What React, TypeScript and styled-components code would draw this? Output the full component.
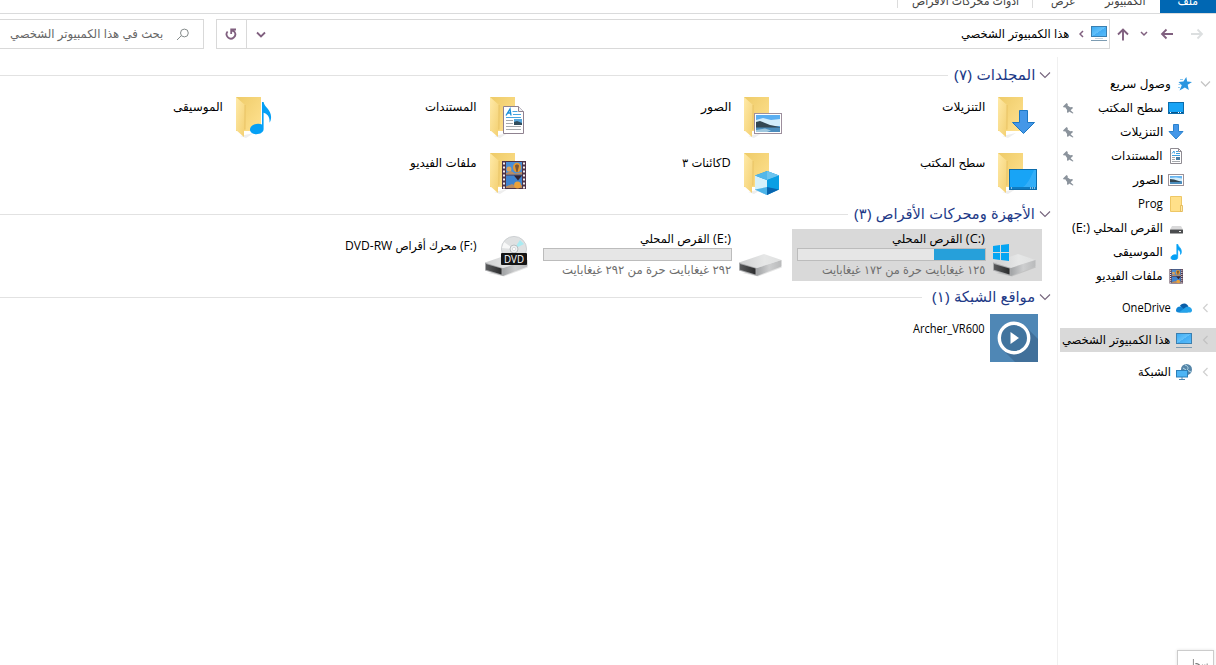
import React, { useLayoutEffect, useRef } from "react";
import styled, { createGlobalStyle } from "styled-components";

const Global = createGlobalStyle`
  * { box-sizing: border-box; }
  html, body { margin: 0; padding: 0; background: #fff; overflow: hidden; }
  body { font-family: "Open Sans", "DejaVu Sans Condensed", "DejaVu Sans", sans-serif; font-size: 12px; color: #000; }
  svg { display: block; flex: none; }
`;

/* ---------- text that keeps a known measure ---------- */

const Measure = styled.span<{ $w: number }>`
  display: block;
  flex: none;
  width: ${(p) => p.$w}px;
  white-space: nowrap;
`;
const Glyphs = styled.span`
  display: inline-block;
  transform-origin: right center;
`;

function Text({ w, children }: { w: number; children: React.ReactNode }) {
  const ref = useRef<HTMLSpanElement>(null);
  useLayoutEffect(() => {
    const el = ref.current;
    if (!el) return;
    const fit = () => {
      el.style.transform = `scaleX(${w / el.offsetWidth})`;
    };
    fit();
    document.fonts?.ready.then(fit);
  }, [w]);
  return (
    <Measure $w={w}>
      <Glyphs ref={ref}>{children}</Glyphs>
    </Measure>
  );
}

/* ---------- layout ---------- */

const Window = styled.div`
  direction: rtl;
  width: 1216px;
  height: 665px;
  display: flex;
  flex-direction: column;
  overflow: hidden;
  background: #fff;
`;
const Ribbon = styled.div`
  height: 14px;
  flex: none;
  display: flex;
  border-bottom: 1px solid #dadbdc;
  overflow: hidden;
  color: #444;
`;
const Tab = styled.div<{ $start: number; $end: number; $file?: boolean }>`
  height: 13px;
  display: flex;
  padding: 0 ${(p) => p.$start}px 0 ${(p) => p.$end}px;
  line-height: 20px;
  background: ${(p) => (p.$file ? "#0067b3" : "transparent")};
  color: ${(p) => (p.$file ? "#fff" : "#444")};
  & > span { margin-top: -9px; }
`;
const TabDivider = styled.i`
  width: 1px;
  height: 8px;
  background: #dcdcdc;
`;
const Toolbar = styled.div`
  height: 43px;
  flex: none;
  display: flex;
  align-items: flex-start;
  padding-top: 5px;
`;
const Nav = styled.div`
  width: 106px;
  height: 30px;
  display: flex;
  align-items: center;
`;
const NavButton = styled.div<{ $before: number }>`
  margin-right: ${(p) => p.$before}px;
`;
const Box = styled.div<{ $w: number }>`
  width: ${(p) => p.$w}px;
  height: 30px;
  border: 1px solid #d9d9d9;
  display: flex;
  align-items: center;
  & > span { margin-bottom: 2px; }
`;
const Address = styled(Box)`
  padding-right: 1px;
`;
const AddressIcon = styled.div`
  margin-bottom: 2px;
`;
const Crumb = styled.div`
  margin: 0 6px 0 10px;
`;
const Filler = styled.div`
  flex: 1;
`;
const DropButton = styled.div`
  width: 29px;
  display: flex;
  justify-content: center;
  padding-right: 1px;
`;
const RefreshButton = styled.div`
  width: 30px;
  height: 28px;
  border-right: 1px solid #d9d9d9;
  display: flex;
  align-items: center;
  justify-content: center;
  padding-right: 2px;
`;
const Search = styled(Box)`
  margin-right: 12px;
  border-left: 0;
  padding-right: 14px;
  gap: 13px;
  color: #666;
`;
const Body = styled.div`
  flex: 1;
  display: flex;
  min-height: 0;
`;
const Sidebar = styled.div`
  width: 159px;
  flex: none;
  border-left: 1px solid #f0f0f0;
  padding: 15px 0 0 2px;
`;
const TreeRow = styled.div<{ $root?: boolean; $active?: boolean; $gap?: boolean }>`
  height: 24px;
  margin-top: ${(p) => (p.$gap ? 8 : 0)}px;
  padding-right: ${(p) => (p.$root ? 5 : 32)}px;
  display: flex;
  align-items: center;
  background: ${(p) => (p.$active ? "#d9d9d9" : "transparent")};
  & > span { margin-bottom: 2px; }
`;
const TreeIcon = styled.div<{ $before?: number }>`
  margin-right: ${(p) => p.$before ?? 0}px;
  margin-left: 5px;
`;
const Pin = styled.div`
  margin-right: auto;
  padding-left: 2px;
`;
const Main = styled.div`
  flex: 1;
  min-width: 0;
  padding-top: 2px;
`;
const Group = styled.div`
  padding-top: 4px;
`;
const GroupHeader = styled.div`
  height: 24px;
  display: flex;
  align-items: center;
  padding-right: 6px;
  color: #1e3a87;
  font-size: 15px;
  line-height: 22px;
  & > span { margin: 0 4px 2px 0; }
`;
const Rule = styled.i<{ $gap: number }>`
  flex: 1;
  height: 1px;
  margin-right: ${(p) => p.$gap}px;
  background: #e2e2e2;
`;
const Tiles = styled.div`
  display: grid;
  grid-template-columns: repeat(4, 250px);
  gap: 4px;
  padding: 3px 15px 0 0;
`;
const Tile = styled.div<{ $selected?: boolean }>`
  height: 52px;
  padding: 2px 4px 2px 0;
  display: flex;
  background: ${(p) => (p.$selected ? "#d9d9d9" : "transparent")};
`;
const FolderIcon = styled.div`
  padding-top: 1px;
`;
const TileText = styled.div<{ $drive?: boolean; $wide?: boolean }>`
  padding-top: ${(p) => (p.$drive ? 0 : 7)}px;
  margin-right: ${(p) => (p.$wide ? 5 : 4)}px;
  line-height: 16px;
  & > span { margin-right: 1px; }
`;
const Capacity = styled.div`
  width: 189px;
  height: 13px;
  margin: 1px 0 0;
  border: 1px solid #bcbcbc;
  background: #e6e6e6;
`;
const Used = styled.div`
  height: 11px;
  background: #26a0da;
`;
const Free = styled.div`
  color: #6d6d6d;
  padding: 1px 1px 0 0;
`;
const Hint = styled.div`
  position: fixed;
  left: 1177px;
  top: 650px;
  width: 37px;
  height: 24px;
  border: 1px solid #ccc;
  background: #fff;
  box-shadow: 0 0 3px rgba(0, 0, 0, 0.12);
  color: #777;
  padding: 4px 5px 0 0;
  line-height: 18px;
`;

/* ---------- small glyphs ---------- */

const Stroke = ({ w, h, d, c = "#80607f", s = 1.5 }: { w: number; h: number; d: string; c?: string; s?: number }) => (
  <svg width={w} height={h} viewBox={`0 0 ${w} ${h}`} fill="none" stroke={c} strokeWidth={s}>
    <path d={d} />
  </svg>
);

const Monitor = () => (
  <svg width="18" height="18" viewBox="0 0 18 18">
    <defs>
      <linearGradient id="scr" x1="0" y1="0" x2="1" y2="1">
        <stop offset="0" stopColor="#38a9f2" /><stop offset=".5" stopColor="#63c1fa" /><stop offset=".52" stopColor="#43adf4" /><stop offset="1" stopColor="#5bbdfa" />
      </linearGradient>
    </defs>
    <rect x="1.5" y="2.5" width="15" height="10" fill="url(#scr)" stroke="#3a7fb0" />
    <path d="M5 14.5h8" stroke="#c8d5dd" />
    <path d="M1 16.500h16" stroke="#7d9cb2" />
  </svg>
);

const PinIcon = () => (
  <svg width="13" height="12" viewBox="0 0 13 12">
    <path d="M1 4.500 4.500 1l1.300 1-.2 1.500 2.600 1.700 2-.1.8 1-2.400 2.100L11.500 11l-.8.600-3.600-2.200L6 11l-1-.8.100-2.200L3.200 5.200l-1.400.3z" fill="#8b939c" />
  </svg>
);

const Film = () => (
  <g>
    <rect width="24" height="28" fill="#4c3347" />
    <rect x="4" y="1" width="16" height="12.5" fill="#4a8fd6" />
    <rect x="4" y="14.5" width="16" height="12.5" fill="#3f83cf" />
    <path d="M4 12l5-2 4 2.500 7-1.500v2.500H4z" fill="#b98b62" />
    <path d="M4 25.500l6-2.500 4 2 6-1v3H4z" fill="#b98b62" />
    <ellipse cx="15" cy="6.5" rx="4" ry="4.8" fill="#e29831" />
    <path d="M13 5c0-2 4-2 4 0l-1.500 6h-1z" fill="#3b2c35" opacity=".6" />
    <ellipse cx="7" cy="8" rx="2.4" ry="2.6" fill="#dda45d" />
    <path d="M12 14.5h8l-4 5z" fill="#322431" />
    <ellipse cx="15.5" cy="24" rx="3.4" ry="3.5" fill="#eaa13a" />
    <path d="M2 1.5v26M22 1.5v26" stroke="#f4eef2" strokeWidth="2" strokeDasharray="2 2" />
  </g>
);

const Scene = () => (
  <g>
    <rect x=".5" y=".5" width="27" height="20" fill="#fff" stroke="#9d8f9d" />
    <rect x="2" y="2" width="24" height="17" fill="#5aaef1" />
    <path d="M2 7l7-2 8 2 9-1v7H2z" fill="#d3edfb" />
    <path d="M2 9l4-1 5 2 5 2 10 2v1H2z" fill="#334753" />
    <path d="M2 14.500h24V19H2z" fill="#4b8dbd" />
    <path d="M2 17l9-1.500 6 2-4 1.500H2z" fill="#9fc8df" />
  </g>
);

const Page = () => (
  <g>
    <path d="M.5.5h15l5 5v22H.5z" fill="#fff" stroke="#8f8290" />
    <path d="M15.5.5v5h5" fill="#eef0f3" stroke="#8f8290" />
    <path d="M3 9.500 7 3l1 6.500M4.500 7h3" fill="none" stroke="#1a8fd8" strokeWidth="1.4" />
    <path d="M9.500 5.500h5M10 8.500h8M3 11.500h15" stroke="#48a5e0" />
    <path d="M3 14.500h7M3 17.500h7M3 20.500h15M3 23.500h15" stroke="#a5a9ad" />
    <rect x="11" y="13" width="8" height="6" fill="#56a6dc" />
    <path d="M11 16l3-1 5 2v2h-8z" fill="#314d5d" />
  </g>
);

const note = "M12 0h1.600c.6 5 7.500 7.500 7.500 15 0 2.600-.8 4.700-1.600 5.800.6-5.800-2-8.800-5.900-10V27c0 3.200-3.400 5.200-7.300 5.200S0 30.300 0 27.600c0-3.500 4-5.900 8.200-5.900 1.500 0 2.800.3 3.800.8z";

const Screen = () => (
  <g>
    <rect x=".5" y=".5" width="27" height="20" fill="#18a4f6" stroke="#0c6cab" />
    <path d="M14 18C18 16 22 8 25 1h2v17z" fill="#46b6fa" opacity=".6" />
    <path d="M1 19h26" stroke="#07558d" />
    <path d="M2 19h1M21 19h5" stroke="#fff" strokeDasharray="1 1" />
  </g>
);

const Cube = () => (
  <g>
    <path d="M12 0l12 4.500v14L12 24 0 18.500v-14z" fill="#1194dc" />
    <path d="M0 4.500 12 9v15L0 18.500z" fill="#d5f1fb" />
    <path d="M12 0 24 4.500 12 9 0 4.500z" fill="#52b7ea" />
    <path d="M12 9V0l12 4.500z" fill="#6cc4ef" />
    <path d="M12 9 24 4.500v14L12 20z" fill="#0a9fe4" />
    <path d="M0 18.500 12 16v8z" fill="#4bb3e8" />
    <path d="M12 16l12 2.500L12 24z" fill="#0765af" />
  </g>
);

type Kind = "download" | "picture" | "document" | "music" | "desktop" | "cube" | "video";

const overlay: Record<Kind, React.ReactNode> = {
  download: <path d="M29.500 17.500h8V29.500h7L33.500 40.500 22.500 29.500h7z" fill="#4497e8" stroke="#1d78c4" />,
  picture: <g transform="translate(18 20)"><Scene /></g>,
  document: <g transform="translate(21 13)"><Page /></g>,
  music: <path transform="translate(22 9)" d={note} fill="#05a0f5" />,
  desktop: <g transform="translate(19 20)"><Screen /></g>,
  cube: <g transform="translate(19 22)"><Cube /></g>,
  video: <g transform="translate(20 12)"><Film /></g>,
};

const Folder = ({ kind }: { kind: Kind }) => (
  <svg width="48" height="47" viewBox="0 0 48 47">
    <defs>
      <linearGradient id="fb" x1="0" y1="0" x2="1" y2="1"><stop offset="0" stopColor="#eecb68" /><stop offset="1" stopColor="#ffe291" /></linearGradient>
      <linearGradient id="ff" x1="0" y1="0" x2="1" y2="1"><stop offset="0" stopColor="#ffeaa8" /><stop offset="1" stopColor="#f3cf70" /></linearGradient>
    </defs>
    <path d="M12 43l14-3-8 5z" fill="#eee" />
    <path d="M8 4h25v34H8z" fill="url(#fb)" />
    <path d="M8 4l9 8v24.500l-1 1v6.500L8 37z" fill="url(#ff)" />
    <path d="M17 12v24.500" stroke="#dfb654" strokeWidth=".6" />
    {overlay[kind]}
  </svg>
);

const Drive = ({ kind }: { kind: "windows" | "plain" | "dvd" }) => (
  <svg width="48" height="48" viewBox="0 0 48 48">
    <defs>
      <linearGradient id="dt" x1="0" y1="0" x2="1" y2="0"><stop offset="0" stopColor="#cfd0d1" /><stop offset=".6" stopColor="#e6e7e7" /><stop offset="1" stopColor="#dfe0e0" /></linearGradient>
      <linearGradient id="ds" x1="0" y1="0" x2="1" y2="0"><stop offset="0" stopColor="#a3a5a7" /><stop offset=".5" stopColor="#cdcecf" /><stop offset="1" stopColor="#b9babb" /></linearGradient>
      <linearGradient id="df" x1="0" y1="0" x2="1" y2="0"><stop offset="0" stopColor="#5a5b5d" /><stop offset="1" stopColor="#2b2c2d" /></linearGradient>
    </defs>
    <path d="M6 42l16 3.500 24-9-2-2z" fill="#000" opacity=".1" />
    <path d="M3 31.500 28 23l17.500 6L21 37z" fill="url(#dt)" />
    <path d="M21 37 45.500 29v6.500L21 45z" fill="url(#ds)" />
    <path d="M3 31.500 21 37v8L3 39.500z" fill="#a8a9ab" />
    <path d="M4 33 19.500 37.500v6L4 38.800z" fill="url(#df)" />
    {kind === "windows" && <path d="M3 15l7-1v7H3zM11 13.900 19 13v8h-8zM3 22h7v7l-7-1zM11 22h8v8l-8-1z" fill="#06a5f2" />}
    {kind === "dvd" && (
      <g>
        <circle cx="32" cy="18" r="12.600" fill="#dfe1e2" stroke="#c5c9cc" strokeWidth=".8" />
        <path d="M32 18 38 9l4 4z" fill="#a9ebf2" />
        <path d="M32 18 22 11l-2 6z" fill="#f7f8f8" />
        <circle cx="32" cy="18" r="4" fill="#eef0f1" stroke="#b9bec1" />
        <circle cx="32" cy="18" r="1.600" fill="#fff" stroke="#c5c9cc" strokeWidth=".6" />
        <rect x="19" y="22" width="26" height="12" rx="1" fill="#151515" />
        <text x="32" y="31.500" textAnchor="middle" direction="ltr" fontFamily="Open Sans, sans-serif" fontSize="10" fill="#fff" textLength="20" lengthAdjust="spacingAndGlyphs">DVD</text>
      </g>
    )}
  </svg>
);

const MediaServer = () => (
  <svg width="48" height="48" viewBox="0 0 48 48">
    <rect width="48" height="48" fill="#4f87b5" />
    <path d="M35.500 12.500 48 25v23H25L12.500 35.500z" fill="#41709a" />
    <circle cx="24" cy="24" r="14.700" fill="#41749e" stroke="#fff" strokeWidth="3.400" />
    <path d="M20.500 18v12l8.500-6z" fill="#fff" />
  </svg>
);

/* ---------- sidebar icons ---------- */

const Small = ({ children }: { children: React.ReactNode }) => (
  <svg width="16" height="16" viewBox="0 0 16 16">{children}</svg>
);
const Mini: Record<string, React.ReactNode> = {
  star: <Small><path d="M10.300 1l.9 4.500 4.800.4-4.300 2.900 1.100 5.200-3.900-2.600-5.400 3.100 2.300-5.200L2.500 6l4.900-.4z" fill="#2b96e0" /><path d="M4 3.500h3M2.500 8.500h2M2 11.500h2" stroke="#8fcaf0" /></Small>,
  desktop: <Small><rect x=".5" y="2.500" width="15" height="11" fill="#18a4f6" stroke="#0c6cab" /><path d="M1 12.500h14" stroke="#07558d" /><path d="M2 12.500h1M10 12.500h4" stroke="#fff" strokeDasharray="1 1" /></Small>,
  download: <Small><path d="M5.500.500h5v7H15L8 15 1 7.500h4.500z" fill="#4497e8" stroke="#2a82cf" /></Small>,
  document: (
    <Small>
      <path d="M2.500.500h8l3 3v12h-11z" fill="#fff" stroke="#8f8b92" />
      <path d="M10.500.500v3h3" fill="none" stroke="#8f8b92" />
      <path d="M4 5.500l2-2.500.5 2.500M8 3.500h2M8 5.500h4M4 7.500h8" fill="none" stroke="#3d9fdf" />
      <path d="M4 9.500h3M4 11.500h3M4 13.500h8" stroke="#a5a9ad" />
      <path d="M8 9h4v3H8z" fill="#4a7fa5" />
    </Small>
  ),
  picture: (
    <Small>
      <rect x=".5" y="2.500" width="15" height="11" fill="#fff" stroke="#9b9299" />
      <path d="M2 4h12v8H2z" fill="#69b6f0" />
      <path d="M2 6l6-.5 6 1V9H2z" fill="#d3edfb" />
      <path d="M2 7l4 .5 8 2.500H2z" fill="#334753" />
      <path d="M2 10h12v2H2z" fill="#4b8dbd" />
    </Small>
  ),
  folder: <Small><path d="M2.500.500h11v15h-11z" fill="#ffe08a" stroke="#eec765" /><path d="M12.500 9.500h2v6h-2z" fill="#ffe9a9" stroke="#dfb44f" strokeWidth=".8" /></Small>,
  drive: <Small><path d="M4 6h9l2 3.500H2z" fill="#d9d9da" /><rect x="2" y="9.500" width="13" height="4" rx=".5" fill="#4b4d4f" /><path d="M11 11.500h2" stroke="#eee" /></Small>,
  music: <Small><path transform="translate(3 .2) scale(.49)" d={note} fill="#05a0f5" stroke="#05a0f5" strokeWidth="1.600" /></Small>,
  video: <Small><g transform="translate(1.500 1) scale(.56 .52)"><Film /></g></Small>,
  cloud: <Small><path d="M4 5.500a5 5 0 0 1 8.500 1L7 10z" fill="#0a5ea8" /><path d="M0 10.500C0 7.500 2.500 6 5 6.500L12 12.500H2.500C1 12.500 0 11.800 0 10.500z" fill="#1185d4" /><path d="M3 12.500 10 7c3-1.200 6 .8 6 3.200 0 1.500-1 2.300-2.500 2.300z" fill="#25a3ea" /></Small>,
  network: <Small><circle cx="10.500" cy="5.500" r="5.500" fill="#5585a8" /><path d="M9 1c3 1 4 3 2 5l4 2M7 4l3 2" fill="none" stroke="#b6dceb" /><rect x=".5" y="6.500" width="11" height="6.500" fill="#4db5f5" stroke="#2b7fb8" /><path d="M6 13v2M3 15.500h6" stroke="#4b88b4" /></Small>,
};

/* ---------- data ---------- */

const quick: [string, React.ReactNode, number, boolean][] = [
  ["desktop", "سطح المكتب", 65, true],
  ["download", "التنزيلات", 43, true],
  ["document", "المستندات", 52, true],
  ["picture", "الصور", 30, true],
  ["folder", "Prog", 25, false],
  ["drive", <>القرص المحلي <bdi dir="ltr">(E:)</bdi></>, 91, false],
  ["music", "الموسيقى", 50, false],
  ["video", "ملفات الفيديو", 67, false],
];

const folders: [Kind, string, number][] = [
  ["download", "التنزيلات", 43],
  ["picture", "الصور", 30],
  ["document", "المستندات", 52],
  ["music", "الموسيقى", 50],
  ["desktop", "سطح المكتب", 65],
  ["cube", "Dكائنات ٣", 49],
  ["video", "ملفات الفيديو", 67],
];

const downChevron = "M1 1.500 6 6.500 11 1.500";

function Section({ title, w, gap = 6, children }: { title: string; w: number; gap?: number; children: React.ReactNode }) {
  return (
    <Group>
      <GroupHeader>
        <Stroke w={12} h={8} d={downChevron} s={1.1} c="#75647c" />
        <Text w={w}>{title}</Text>
        <Rule $gap={gap} />
      </GroupHeader>
      <Tiles>{children}</Tiles>
    </Group>
  );
}

export default function App() {
  return (
    <Window>
      <Global />
      <Ribbon>
        <Tab $file $start={18} $end={17}><Text w={21}>ملف</Text></Tab>
        <Tab $start={14} $end={15}><Text w={41}>الكمبيوتر</Text></Tab>
        <Tab $start={15} $end={18}><Text w={24}>عرض</Text></Tab>
        <TabDivider />
        <Tab $start={13} $end={14}><Text w={107}>أدوات محركات الأقراص</Text></Tab>
        <TabDivider />
      </Ribbon>
      <Toolbar>
        <Nav>
          <NavButton $before={12}><Stroke w={14} h={12} d="M1 6h11M7.500 1.500 12 6 7.500 10.500" c="#dcdfe0" s={1.8} /></NavButton>
          <NavButton $before={16}><Stroke w={14} h={12} d="M13 6H2M6.500 1.500 2 6l4.500 4.500" s={1.8} /></NavButton>
          <NavButton $before={12}><Stroke w={8} h={6} d="M1 1l3 3 3-3" /></NavButton>
          <NavButton $before={11}><Stroke w={12} h={14} d="M6 13.500V2.500M1 7.500l5-5 5 5" s={1.9} /></NavButton>
        </Nav>
        <Address $w={894}>
          <AddressIcon><Monitor /></AddressIcon>
          <Crumb><Stroke w={5} h={8} d="M4 1 1 4l3 3" /></Crumb>
          <Text w={108}>هذا الكمبيوتر الشخصي</Text>
          <Filler />
          <DropButton><Stroke w={10} h={7} d="M1 1.500l4 4 4-4" s={1.8} /></DropButton>
          <RefreshButton>
            <Stroke w={12} h={12} d="M2.600 3.500A4.300 4.300 0 1 0 9.400 3.700L6.500 2M11 1.500H6.200V6" s={1.8} />
          </RefreshButton>
        </Address>
        <Search $w={204}>
          <Stroke w={13} h={13} d="M1 12l4.200-4.200M4.500 5a3.900 3.900 0 1 0 7.800 0 3.900 3.900 0 1 0-7.800 0" s={1} c="#858b8b" />
          <Text w={153}>بحث في هذا الكمبيوتر الشخصي</Text>
        </Search>
      </Toolbar>
      <Body>
        <Sidebar>
          <TreeRow $root>
            <Stroke w={11} h={8} d="M1 1.500l4.500 4.500L10 1.500" c="#c5c5c5" s={1.3} />
            <TreeIcon $before={8}>{Mini.star}</TreeIcon>
            <Text w={61}>وصول سريع</Text>
          </TreeRow>
          {quick.map(([icon, label, w, pinned]) => (
            <TreeRow key={icon}>
              <TreeIcon>{Mini[icon]}</TreeIcon>
              <Text w={w}>{label}</Text>
              {pinned && <Pin><PinIcon /></Pin>}
            </TreeRow>
          ))}
          <TreeRow $root $gap>
            <Stroke w={11} h={10} d="M7.500 1l-4 4 4 4" c="#d0d0d0" s={1.2} />
            <TreeIcon $before={8}>{Mini.cloud}</TreeIcon>
            <Text w={49}>OneDrive</Text>
          </TreeRow>
          <TreeRow $root $gap $active>
            <Stroke w={11} h={10} d="M7.500 1l-4 4 4 4" c="#c2c2c2" s={1.2} />
            <TreeIcon $before={7}><Monitor /></TreeIcon>
            <Text w={108}>هذا الكمبيوتر الشخصي</Text>
          </TreeRow>
          <TreeRow $root $gap>
            <Stroke w={11} h={10} d="M7.500 1l-4 4 4 4" c="#d0d0d0" s={1.2} />
            <TreeIcon $before={8}>{Mini.network}</TreeIcon>
            <Text w={33}>الشبكة</Text>
          </TreeRow>
        </Sidebar>
        <Main>
          <Section title="المجلدات (٧)" w={81}>
            {folders.map(([kind, label, w]) => (
              <Tile key={kind}>
                <FolderIcon><Folder kind={kind} /></FolderIcon>
                <TileText><Text w={w}>{label}</Text></TileText>
              </Tile>
            ))}
          </Section>
          <Section title="الأجهزة ومحركات الأقراص (٣)" w={181}>
            <Tile $selected>
              <Drive kind="windows" />
              <TileText $drive>
                <Text w={93}><bdi dir="ltr">(C:)</bdi> القرص المحلي</Text>
                <Capacity><Used style={{ width: "27.5%" }} /></Capacity>
                <Free><Text w={163}>١٢٥ غيغابايت حرة من ١٧٢ غيغابايت</Text></Free>
              </TileText>
            </Tile>
            <Tile>
              <Drive kind="plain" />
              <TileText $drive>
                <Text w={91}><bdi dir="ltr">(E:)</bdi> القرص المحلي</Text>
                <Capacity />
                <Free><Text w={169}>٢٩٢ غيغابايت حرة من ٢٩٢ غيغابايت</Text></Free>
              </TileText>
            </Tile>
            <Tile>
              <Drive kind="dvd" />
              <TileText $wide><Text w={132}><bdi dir="ltr">(F:)</bdi> محرك أقراص DVD-RW</Text></TileText>
            </Tile>
          </Section>
          <Section title="مواقع الشبكة (١)" w={103} gap={10}>
            <Tile>
              <MediaServer />
              <TileText><Text w={72}>Archer_VR600</Text></TileText>
            </Tile>
          </Section>
        </Main>
      </Body>
      <Hint><Text w={20}>سجل</Text></Hint>
    </Window>
  );
}
